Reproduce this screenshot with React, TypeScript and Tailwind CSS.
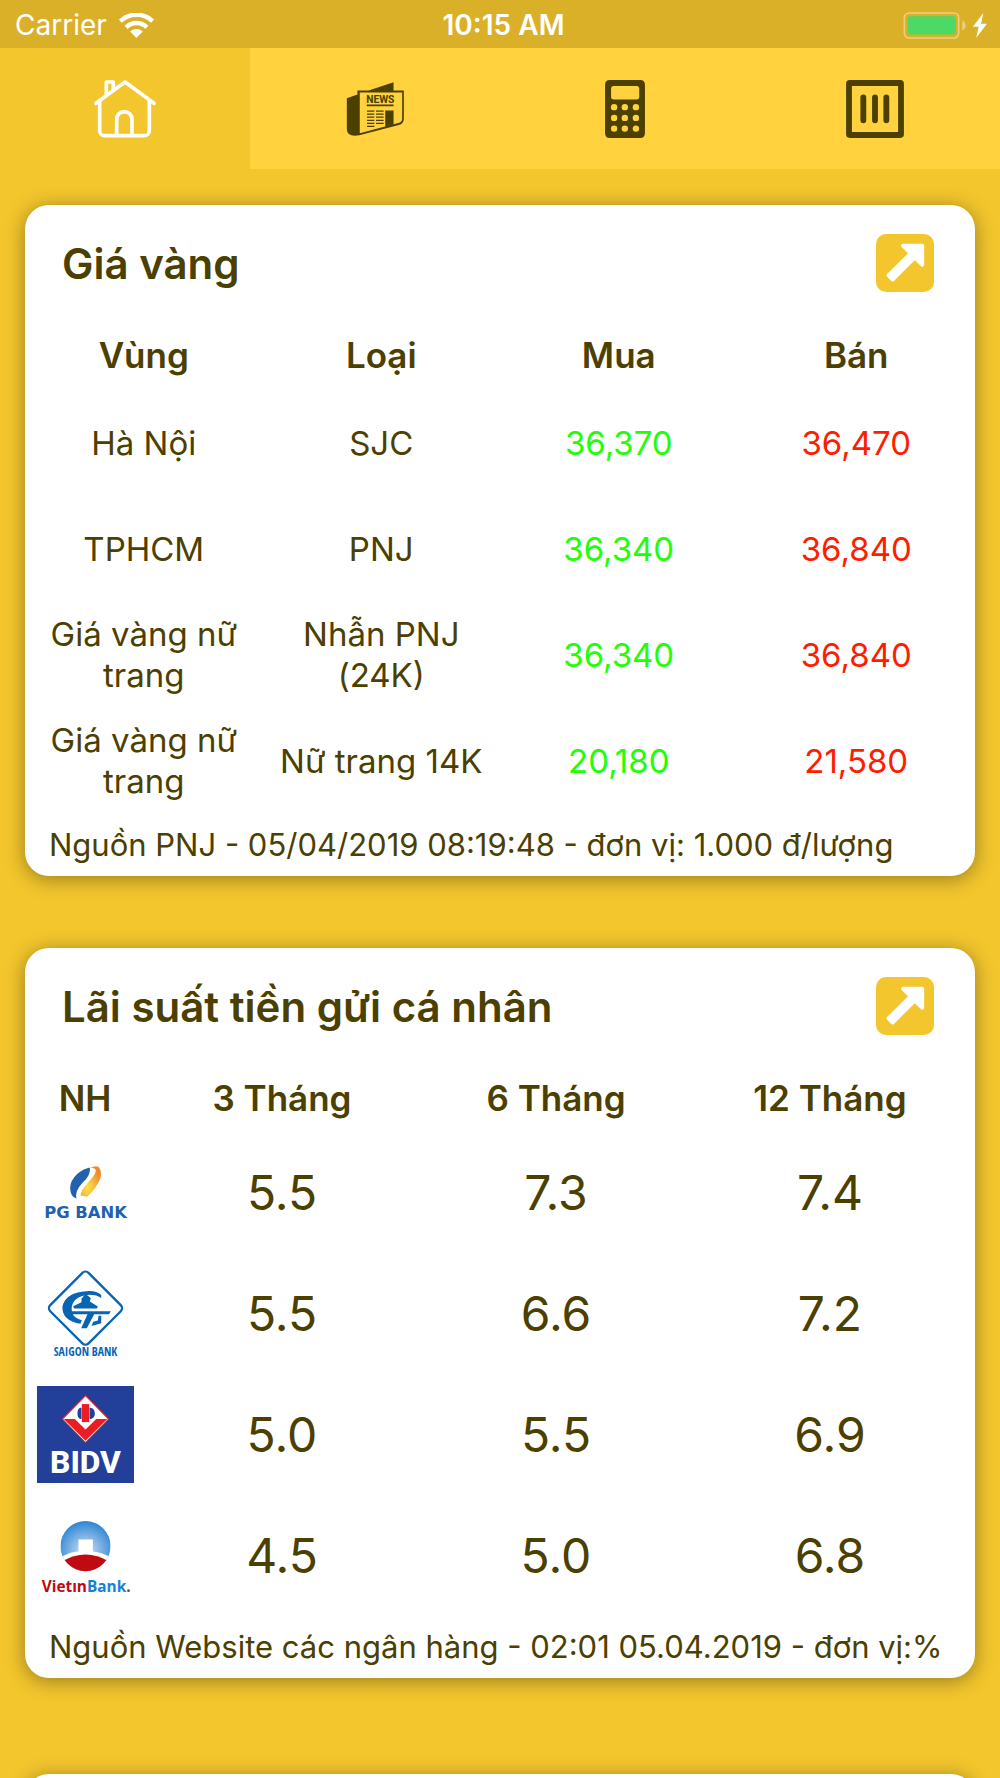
import { useState } from 'react';
import type { ReactNode } from 'react';

type TabId = 'home' | 'news' | 'calculator' | 'columns';

interface GoldPrice {
  region: string;
  kind: string;
  buy: string;
  sell: string;
}

interface BankRate {
  bank: string;
  logo: ReactNode;
  rates: string[];
}

const GOLD_PRICES: GoldPrice[] = [
  { region: 'Hà Nội', kind: 'SJC', buy: '36,370', sell: '36,470' },
  { region: 'TPHCM', kind: 'PNJ', buy: '36,340', sell: '36,840' },
  { region: 'Giá vàng nữ trang', kind: 'Nhẫn PNJ (24K)', buy: '36,340', sell: '36,840' },
  { region: 'Giá vàng nữ trang', kind: 'Nữ trang 14K', buy: '20,180', sell: '21,580' },
];

const BANK_RATES: BankRate[] = [
  { bank: 'PG Bank', logo: <PgBankLogo />, rates: ['5.5', '7.3', '7.4'] },
  { bank: 'Saigon Bank', logo: <SaigonBankLogo />, rates: ['5.5', '6.6', '7.2'] },
  { bank: 'BIDV', logo: <BidvLogo />, rates: ['5.0', '5.5', '6.9'] },
  { bank: 'VietinBank', logo: <VietinBankLogo />, rates: ['4.5', '5.0', '6.8'] },
];

const TABS: { id: TabId; label: string; icon: ReactNode }[] = [
  { id: 'home', label: 'Trang chủ', icon: <HomeIcon /> },
  { id: 'news', label: 'Tin tức', icon: <NewsIcon /> },
  { id: 'calculator', label: 'Máy tính', icon: <CalculatorIcon /> },
  { id: 'columns', label: 'Danh mục', icon: <ColumnsIcon /> },
];

function HomeIcon() {
  return (
    <svg viewBox="0 0 186 174" className="h-[58px] w-[62px]" fill="none" stroke="currentColor" strokeWidth="11" strokeLinecap="round" strokeLinejoin="round">
      <path d="M6 70 93 6l87 64" />
      <path d="M17 64v88a15 15 0 0 0 15 15h119a15 15 0 0 0 15-15V64" />
      <path d="M68 166v-48a23 23 0 0 1 46 0v48" />
      <path d="M37 44V6h21v24" />
    </svg>
  );
}

function NewsIcon() {
  return (
    <svg viewBox="0 0 174 163" className="h-[54px] w-[58px]" fill="currentColor">
      <path d="M2 49 34 38V26h34l75-25v25h31v84q0 16-15 20L40 161q-38 6-38-18ZM41 32v123l116-31q12-3 12-14V32Z" fillRule="evenodd" />
      <text x="103" y="64" textAnchor="middle" fontSize="31" fontWeight="700" fontFamily="Roboto, sans-serif">
        NEWS
      </text>
      <path d="M62 68h81v5H62zM118 86h25v44l-25 7z" />
      <path d="M63 88h22M63 97h22M63 106h22M63 116h22M63 125h22M63 134h22M90 88h23M90 97h23M90 106h23M90 116h23M90 125h23" stroke="currentColor" strokeWidth="3.5" />
    </svg>
  );
}

function CalculatorIcon() {
  return (
    <svg viewBox="0 0 119 173" className="h-[58px] w-[40px]" fill="currentColor">
      <path
        fillRule="evenodd"
        d="M14 0h91q14 0 14 14v145q0 14-14 14H14q-14 0-14-14V14Q0 0 14 0Zm12 18q-8 0-8 8v24q0 8 8 8h68q8 0 8-8V26q0-8-8-8Z"
      />
      <g className="fill-[#ffd23e]">
        {[81, 113, 145].map((cy) =>
          [27, 59, 92].map((cx) => <circle key={`${cx}-${cy}`} cx={cx} cy={cy} r="9.5" />),
        )}
      </g>
    </svg>
  );
}

function ColumnsIcon() {
  return (
    <svg viewBox="0 0 174 174" className="size-[58px]" fill="none" stroke="currentColor" strokeWidth="17.5">
      <rect x="9" y="9" width="156" height="156" rx="2" />
      <path d="M52 52v69M87 52v69M121 52v69" strokeLinecap="round" />
    </svg>
  );
}

function ArrowIcon() {
  return (
    <svg viewBox="0 0 174 174" className="size-[58px]">
      <path
        d="M81 35h58v58l-23-22-66 66-13-13 67-66Z"
        className="fill-white stroke-white"
        strokeWidth="11"
        strokeLinejoin="round"
      />
    </svg>
  );
}

function WifiIcon() {
  return (
    <svg viewBox="0 0 103 73" className="h-[25px] w-[35px]" fill="none" stroke="currentColor" strokeWidth="13">
      <path d="M4 24a68 68 0 0 1 95 0" />
      <path d="M21 42a43 43 0 0 1 61 0" />
      <path d="M33 54a27 27 0 0 1 37 0L51 73Z" fill="currentColor" stroke="none" />
    </svg>
  );
}

function BatteryIcon() {
  return (
    <svg viewBox="0 0 256 82" className="h-[27px] w-[85px]">
      <rect x="3" y="3" width="165" height="76" rx="15" fill="none" stroke="#ecd080" strokeWidth="5" />
      <rect x="13" y="13" width="146" height="55" rx="7" fill="#4cd964" />
      <path d="M179 26q10 6 10 15t-10 15Z" fill="#ecd080" />
      <path d="M243 3 211 45h18l-8 34 33-43h-18Z" fill="#fff" />
    </svg>
  );
}

function PgBankLogo() {
  return (
    <svg viewBox="0 0 290 290" className="size-[97px]" role="img" aria-label="PG Bank">
      <defs>
        <radialGradient id="pg-flame" cx="0.35" cy="0.7" r="0.7">
          <stop offset="0" stopColor="#fbe34a" />
          <stop offset="1" stopColor="#f3892b" />
        </radialGradient>
      </defs>
      <path d="M158 70q-20 4-38 20-21 20-21 42 1 26 19 31-6-21 18-47 26-24 22-46Z" fill="#2360ae" />
      <path d="M160 72q16-10 26-2 8 14 4 30-10 30-40 58l-20-4q2-16 20-36 26-26 26-40-4-8-16-6Z" fill="url(#pg-flame)" />
      <text x="145" y="220" textAnchor="middle" fontSize="49" fontWeight="700" fontFamily="'DejaVu Sans', sans-serif" fill="#2360ae">
        PG BANK
      </text>
    </svg>
  );
}

function SaigonBankLogo() {
  return (
    <svg viewBox="0 0 290 290" className="size-[97px]" role="img" aria-label="Saigon Bank" fill="#0865b4">
      <rect x="64" y="48" width="162" height="162" rx="13" transform="rotate(45 145 129)" fill="none" stroke="#0865b4" strokeWidth="7" />
      <g transform="translate(0 8)">
        <path d="M192 82q-12-12-36-12-70 2-80 46-2 42 54 52l4-11q-34-8-30-40 6-32 52-36 24 0 36 10Z" />
        <path d="M133 93l12-14 16 12-3 10 24 15-3 6h-68l-3-7 25-12Z" />
        <path d="M97 130h124l-6 9h-44l-22 42h-17l19-42H103Z" />
        <path d="M192 144v22l-29 8 5-12 14-4 2-14Z" />
      </g>
      <text x="145" y="271" textAnchor="middle" fontSize="35" fontWeight="700" fontFamily="'Open Sans Condensed', 'DejaVu Sans Condensed', 'Liberation Sans Narrow', sans-serif">
        SAIGON BANK
      </text>
    </svg>
  );
}

function BidvLogo() {
  return (
    <svg viewBox="0 0 290 290" className="size-[97px]" role="img" aria-label="BIDV">
      <path d="M0 0h290v290H0z" fill="#22409a" />
      <g transform="translate(0 -3)">
        <path d="M145 32 214 102 145 172 76 102Z" fill="#fff" stroke="#ed1c24" strokeWidth="3" />
        <path d="M133 68v34h-4q-8-4-8-17t8-17ZM157 68h4q12 4 12 17t-12 17h-4Z" fill="#22409a" />
        <path d="M134 57h22v54h-22z" fill="#ed1c24" />
        <path d="M80 102h33l32 31 32-31h33l-65 65Z" fill="#ed1c24" />
      </g>
      <text x="145" y="260" textAnchor="middle" fontSize="95" fontWeight="800" fontFamily="Roboto, sans-serif" fill="#fff">
        BIDV
      </text>
    </svg>
  );
}

function VietinBankLogo() {
  return (
    <svg viewBox="0 0 290 290" className="size-[97px]" role="img" aria-label="VietinBank">
      <defs>
        <radialGradient id="vietin-sky" cx="0.5" cy="0.6" r="0.6">
          <stop offset="0" stopColor="#d4e2f6" />
          <stop offset="1" stopColor="#2d85d4" />
        </radialGradient>
        <clipPath id="vietin-globe">
          <circle cx="145" cy="117" r="75" />
        </clipPath>
      </defs>
      <g clipPath="url(#vietin-globe)">
        <path d="M70 42h150v150H70z" fill="url(#vietin-sky)" />
        <path d="M60 157q32-22 64-24V97h43v36q34 4 64 24l-15 60H70Z" fill="#fff" />
        <path d="M76 162q69-40 138 0v40H76Z" fill="#bf0a12" />
      </g>
      <text x="147" y="255" textAnchor="middle" fontSize="46" fontWeight="700" fontFamily="'Open Sans', sans-serif" fill="#bf0a12">
        Vietın<tspan fill="#1681d2">Bank</tspan>
        <tspan fill="#555">.</tspan>
      </text>
    </svg>
  );
}

function StatusBar() {
  return (
    <header className="grid h-12 shrink-0 grid-cols-3 items-center bg-[#dab028] pt-0.5 pr-2 pl-[15px] text-[28px] leading-8 text-white">
      <div className="flex items-center gap-3">
        <span>Carrier</span>
        <WifiIcon />
      </div>
      <span className="text-center font-semibold">10:15 AM</span>
      <div className="mr-1 flex justify-end">
        <BatteryIcon />
      </div>
    </header>
  );
}

interface CardProps {
  title: string;
  footer: string;
  children: ReactNode;
}

function Card({ title, footer, children }: CardProps) {
  return (
    <section className="rounded-3xl bg-white shadow-[0_3px_20px_rgba(0,0,0,0.38)]">
      <div className="flex h-[116px] items-center justify-between pr-[41px] pl-[37px]">
        <h2 className="text-[42px] font-semibold">{title}</h2>
        <button type="button" aria-label={`Xem ${title}`} className="rounded-[10px] bg-[#f3c62d]">
          <ArrowIcon />
        </button>
      </div>
      {children}
      <p className="flex h-[62px] items-center pl-6 text-[31px] whitespace-nowrap">{footer}</p>
    </section>
  );
}

export default function App() {
  const [activeTab, setActiveTab] = useState<TabId>('home');

  return (
    <div className="flex h-screen flex-col overflow-hidden bg-[#f3c62d] font-['Inter','Noto_Sans',sans-serif] text-[#4b4000]">
      <StatusBar />

      <nav className="grid h-[121px] shrink-0 grid-cols-4">
        {TABS.map((tab) => (
          <button
            key={tab.id}
            type="button"
            aria-label={tab.label}
            onClick={() => setActiveTab(tab.id)}
            className={`flex items-center justify-center ${
              activeTab === tab.id ? 'bg-[#f3c62d] text-white' : 'bg-[#ffd23e]'
            }`}
          >
            {tab.icon}
          </button>
        ))}
      </nav>

      <main className="flex-1 overflow-hidden px-[25px] pt-9">
        <Card title="Giá vàng" footer="Nguồn PNJ - 05/04/2019 08:19:48 - đơn vị: 1.000 đ/lượng">
          <table className="w-full table-fixed text-center text-[33px] leading-[41px]">
            <thead>
              <tr className="h-[69px] text-[35px]">
                <th className="font-semibold">Vùng</th>
                <th className="font-semibold">Loại</th>
                <th className="font-semibold">Mua</th>
                <th className="font-semibold">Bán</th>
              </tr>
            </thead>
            <tbody>
              {GOLD_PRICES.map((row) => (
                <tr key={`${row.region}-${row.kind}`} className="h-[106px]">
                  <td className="px-4">{row.region}</td>
                  <td className="px-4">{row.kind}</td>
                  <td className="text-[#21ff06]">{row.buy}</td>
                  <td className="text-[#ff1d00]">{row.sell}</td>
                </tr>
              ))}
            </tbody>
          </table>
        </Card>

        <div className="mt-18">
          <Card title="Lãi suất tiền gửi cá nhân" footer="Nguồn Website các ngân hàng - 02:01 05.04.2019 - đơn vị:%">
            <div className="pr-2">
              <table className="w-full table-fixed text-center text-[48px]">
                <thead>
                  <tr className="h-[68px] text-[35px]">
                    <th className="w-[120px] font-semibold">NH</th>
                    <th className="font-semibold">3 Tháng</th>
                    <th className="font-semibold">6 Tháng</th>
                    <th className="font-semibold">12 Tháng</th>
                  </tr>
                </thead>
                <tbody>
                  {BANK_RATES.map((row) => (
                    <tr key={row.bank} className="h-[121px]">
                      <td>
                        <div className="flex justify-center">{row.logo}</div>
                      </td>
                      {row.rates.map((rate, i) => (
                        <td key={i}>{rate}</td>
                      ))}
                    </tr>
                  ))}
                </tbody>
              </table>
            </div>
          </Card>
        </div>

        <section className="mt-24 h-40 rounded-3xl bg-white shadow-[0_3px_20px_rgba(0,0,0,0.38)]" />
      </main>
    </div>
  );
}
